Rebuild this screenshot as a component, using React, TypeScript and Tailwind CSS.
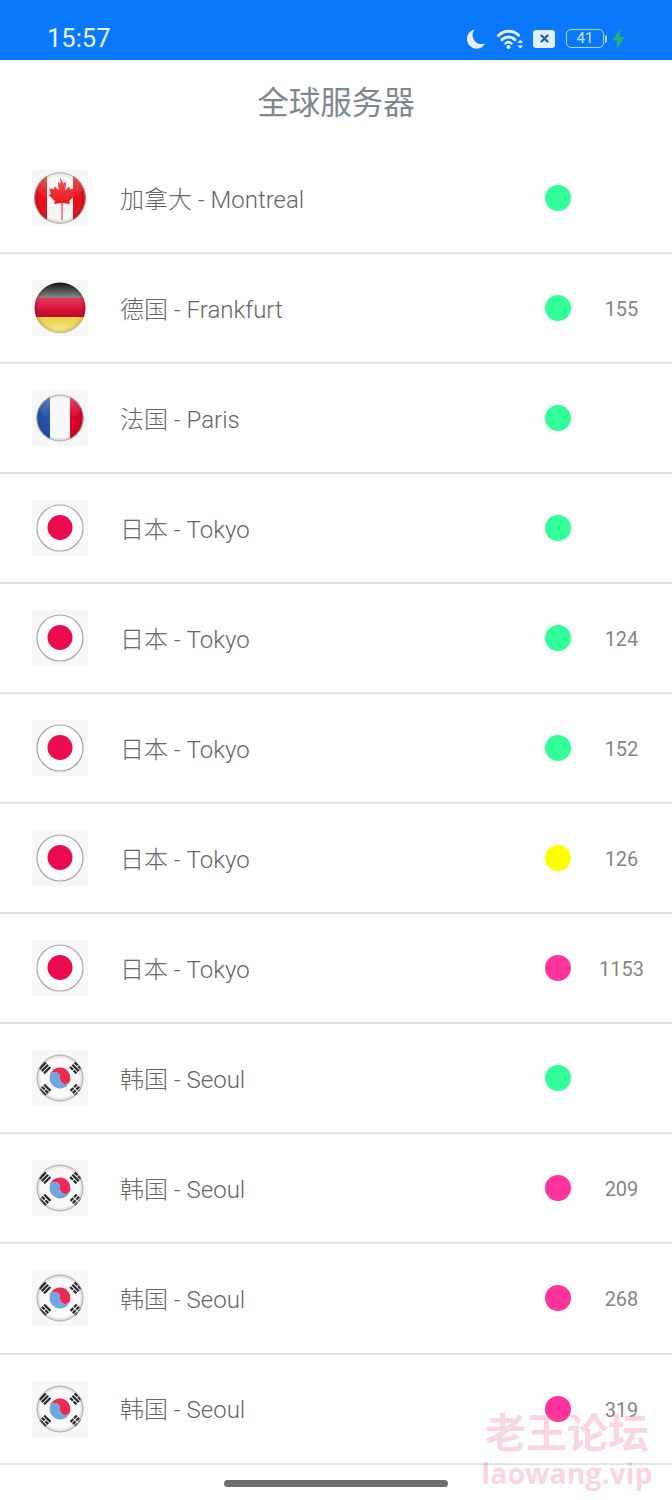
import { useId } from 'react'

type FlagKind = 'ca' | 'de' | 'fr' | 'jp' | 'kr'

type Server = {
  flag: FlagKind
  name: string
  status: 'green' | 'yellow' | 'pink'
  ping?: number
}

const servers: Server[] = [
  { flag: 'ca', name: '加拿大 - Montreal', status: 'green' },
  { flag: 'de', name: '德国 - Frankfurt', status: 'green', ping: 155 },
  { flag: 'fr', name: '法国 - Paris', status: 'green' },
  { flag: 'jp', name: '日本 - Tokyo', status: 'green' },
  { flag: 'jp', name: '日本 - Tokyo', status: 'green', ping: 124 },
  { flag: 'jp', name: '日本 - Tokyo', status: 'green', ping: 152 },
  { flag: 'jp', name: '日本 - Tokyo', status: 'yellow', ping: 126 },
  { flag: 'jp', name: '日本 - Tokyo', status: 'pink', ping: 1153 },
  { flag: 'kr', name: '韩国 - Seoul', status: 'green' },
  { flag: 'kr', name: '韩国 - Seoul', status: 'pink', ping: 209 },
  { flag: 'kr', name: '韩国 - Seoul', status: 'pink', ping: 268 },
  { flag: 'kr', name: '韩国 - Seoul', status: 'pink', ping: 319 },
]

const statusColors = {
  green: 'bg-[#33ff99]',
  yellow: 'bg-[#ffff00]',
  pink: 'bg-[#ff3399]',
}

function Trigram({ x, y, angle, pattern }: { x: number; y: number; angle: number; pattern: boolean[] }) {
  return (
    <g transform={`translate(${x} ${y}) rotate(${angle})`} fill="#2a2a2a">
      {pattern.map((split, i) => {
        const by = -4.4 + i * 3.2
        return split ? (
          <g key={i}>
            <rect x={-4.5} y={by} width={4} height={2.2} />
            <rect x={0.5} y={by} width={4} height={2.2} />
          </g>
        ) : (
          <rect key={i} x={-4.5} y={by} width={9} height={2.2} />
        )
      })}
    </g>
  )
}

function FlagArt({ kind, id }: { kind: FlagKind; id: string }) {
  if (kind === 'ca') {
    return (
      <>
        <rect width="56" height="56" fill="#f8f5f5" />
        <rect x="0" width="15" height="56" fill="#e5121c" />
        <rect x="41" width="15" height="56" fill="#e5121c" />
        <path
          d="M28 7l3.4 6.6 2.8-1.6-1 8.4 4-4 1 2.8 4.6-.9-1.3 5.6 2 1.1-6.4 6 1 2.9-7.2-1-.4 1.2v15.9h-1v-15.9l-.4-1.2-7.2 1 1-2.9-6.4-6 2-1.1-1.3-5.6 4.6.9 1-2.8 4 4-1-8.4 2.8 1.6z"
          fill="#ea1c24"
        />
      </>
    )
  }
  if (kind === 'de') {
    return (
      <>
        <defs>
          <linearGradient id={`${id}-black`} x1="0" y1="0" x2="0" y2="1">
            <stop offset="0.1" stopColor="#111" />
            <stop offset="1" stopColor="#8a8a8a" />
          </linearGradient>
          <linearGradient id={`${id}-red`} x1="0" y1="0" x2="0" y2="1">
            <stop offset="0" stopColor="#e23a5c" />
            <stop offset="0.6" stopColor="#d8123a" />
            <stop offset="1" stopColor="#b80d2e" />
          </linearGradient>
          <linearGradient id={`${id}-gold`} x1="0" y1="0" x2="0" y2="1">
            <stop offset="0" stopColor="#eccf40" />
            <stop offset="1" stopColor="#f8eeaa" />
          </linearGradient>
        </defs>
        <rect width="56" height="18" fill={`url(#${id}-black)`} />
        <rect y="18" width="56" height="19" fill={`url(#${id}-red)`} />
        <rect y="37" width="56" height="19" fill={`url(#${id}-gold)`} />
      </>
    )
  }
  if (kind === 'fr') {
    return (
      <>
        <rect width="18" height="56" fill="#2450a8" />
        <rect x="18" width="20" height="56" fill="#f8f8f8" />
        <rect x="38" width="18" height="56" fill="#d90429" />
      </>
    )
  }
  if (kind === 'jp') {
    return (
      <>
        <rect width="56" height="56" fill="#fdfdfd" />
        <circle cx="28" cy="27.5" r="12.5" fill="#ea0c4e" />
      </>
    )
  }
  return (
    <>
      <rect width="56" height="56" fill="#fafafa" />
      <g transform="rotate(8 28 28)">
        <path d="M17.5 28a10.5 10.5 0 0 1 21 0 5.25 5.25 0 0 1-10.5 0 5.25 5.25 0 0 0-10.5 0z" fill="#ee2a54" />
        <path d="M17.5 28a5.25 5.25 0 0 1 10.5 0 5.25 5.25 0 0 0 10.5 0 10.5 10.5 0 0 1-21 0z" fill="#6fa6e0" />
      </g>
      <Trigram x={13} y={18} angle={-45} pattern={[false, false, false]} />
      <Trigram x={43.5} y={18} angle={45} pattern={[true, false, true]} />
      <Trigram x={13} y={40} angle={45} pattern={[false, true, false]} />
      <Trigram x={44} y={40} angle={-45} pattern={[true, true, true]} />
    </>
  )
}

const flagRadius: Record<FlagKind, number> = { ca: 25.8, de: 25.5, fr: 23.5, jp: 23.5, kr: 23.5 }

function Flag({ kind }: { kind: FlagKind }) {
  const id = useId()
  const r = flagRadius[kind]
  return (
    <div className="w-14 h-14 shrink-0 bg-[#f7f7f7]">
      <svg width="56" height="56" viewBox="0 0 56 56">
        <defs>
          <clipPath id={`${id}-clip`}>
            <circle cx="28" cy="28" r={r} />
          </clipPath>
          <linearGradient id={`${id}-gloss`} x1="0" y1="0" x2="0" y2="1">
            <stop offset="0" stopColor="#fff" stopOpacity="0.35" />
            <stop offset="0.6" stopColor="#fff" stopOpacity="0.1" />
            <stop offset="1" stopColor="#fff" stopOpacity="0" />
          </linearGradient>
          <radialGradient id={`${id}-edge`} cx="0.5" cy="0.5" r="0.5">
            <stop offset="0.82" stopColor="#000" stopOpacity="0" />
            <stop offset="1" stopColor="#000" stopOpacity="0.18" />
          </radialGradient>
        </defs>
        <g clipPath={`url(#${id}-clip)`}>
          <FlagArt kind={kind} id={id} />
          {kind !== 'jp' && <circle cx="28" cy="28" r={r} fill={`url(#${id}-edge)`} />}
          {(kind === 'ca' || kind === 'fr') && <ellipse cx="28" cy="17" rx={r - 3} ry="14" fill={`url(#${id}-gloss)`} />}
        </g>
        {kind !== 'de' && (
          <circle
            cx="28"
            cy="28"
            r={r - 0.5}
            fill="none"
            stroke="#a6a6a6"
            strokeWidth={kind === 'jp' ? 1.2 : 0.8}
          />
        )}
      </svg>
    </div>
  )
}

function StatusIcons() {
  return (
    <div className="flex items-center text-[#e3effe]">
      <svg width="18" height="20" viewBox="0 0 18 20" fill="currentColor">
        <path d="M7.5 0.5C3.2 1.5 0 5.3 0 10c0 5.4 4.3 9.7 9.6 9.7 3.7 0 6.9-2 8.4-5.2-1 .4-2.2.6-3.4.6C9.5 15.1 5.6 11 5.6 6c0-2 .7-4 1.9-5.5z" />
      </svg>
      <svg className="ml-3" width="27" height="20" viewBox="0 0 27 20" fill="none" stroke="currentColor" strokeLinecap="round">
        <path d="M1.5 6.5C7 1 16 .9 21.5 6.2" strokeWidth="3" />
        <path d="M5 10.6c3.8-3.6 9.4-3.6 13 0" strokeWidth="3" />
        <path d="M8.7 14.4c1.8-1.6 3.9-1.6 5.6 0" strokeWidth="2.6" />
        <circle cx="11.5" cy="18" r="2" fill="currentColor" stroke="none" />
        <path d="M23.3 10.8l2.9 3.2h-5.8zM23.3 19.6l-2.9-3.2h5.8z" fill="currentColor" stroke="none" />
      </svg>
      <div className="ml-[9px] w-[22px] h-[18px] rounded-[3px] bg-[#e3effe] flex items-center justify-center">
        <svg width="9" height="9" viewBox="0 0 9 9" stroke="#1c5fa8" strokeWidth="2.2" strokeLinecap="round">
          <path d="M1.5 1.5l6 6M7.5 1.5l-6 6" />
        </svg>
      </div>
      <div className="ml-[11px] flex items-center">
        <div className="w-[38px] h-[19px] rounded-[5px] border-[1.5px] border-[#b5d8fb] flex items-center justify-center text-[15px] leading-none font-['Roboto',sans-serif] text-[#cfe4fc]">
          41
        </div>
        <div className="ml-px w-0.5 h-2 rounded-r-sm bg-[#b5d8fb]" />
      </div>
      <svg className="ml-[5px]" width="13" height="22" viewBox="0 0 13 22" fill="#27ae78">
        <path d="M8.5 0L0.5 12.5h4.7L4.4 22 12.5 9H7.6z" />
      </svg>
    </div>
  )
}

function ServerRow({ server }: { server: Server }) {
  return (
    <li className="h-[110.05px] flex items-center pl-8 border-b-2 border-[#e3e3e3]">
      <Flag kind={server.flag} />
      <span className="ml-8 pt-[3px] flex-1 text-2xl font-light text-[#666666] leading-none">{server.name}</span>
      <span className={`w-[26px] h-[26px] rounded-full ${statusColors[server.status]}`} />
      <span className="w-[101px] pt-[2px] text-center text-xl text-[#858585]">{server.ping}</span>
    </li>
  )
}

export default function App() {
  return (
    <main className="relative h-[1500px] overflow-hidden bg-white font-['Roboto','Noto_Sans_CJK_SC',sans-serif]">
      <header className="h-[60px] bg-[#0a78fa] flex items-center justify-between pl-[47px] pr-[47px] pt-[17px]">
        <span className="text-[25.5px] leading-none text-[#e9f3ff]">15:57</span>
        <StatusIcons />
      </header>

      <h1 className="h-[84px] flex items-center justify-center pt-1 text-[31.5px] text-[#7f8890]">全球服务器</h1>

      <ul>
        {servers.map((server, i) => (
          <ServerRow key={i} server={server} />
        ))}
      </ul>

      {/* watermark */}
      <div className="absolute left-[482px] top-[1410px] w-[170px] flex flex-col items-center font-bold text-[#ee6f90]/30 pointer-events-none">
        <span className="text-[41px] leading-[48px]">老王论坛</span>
        <span className="mt-[-2px] text-[28.5px] leading-[34px] font-['Open_Sans',sans-serif]">laowang.vip</span>
      </div>

      <div className="absolute left-[224px] top-[1480px] w-[224px] h-[7px] rounded-full bg-[#6e6e6e]" />
    </main>
  )
}
